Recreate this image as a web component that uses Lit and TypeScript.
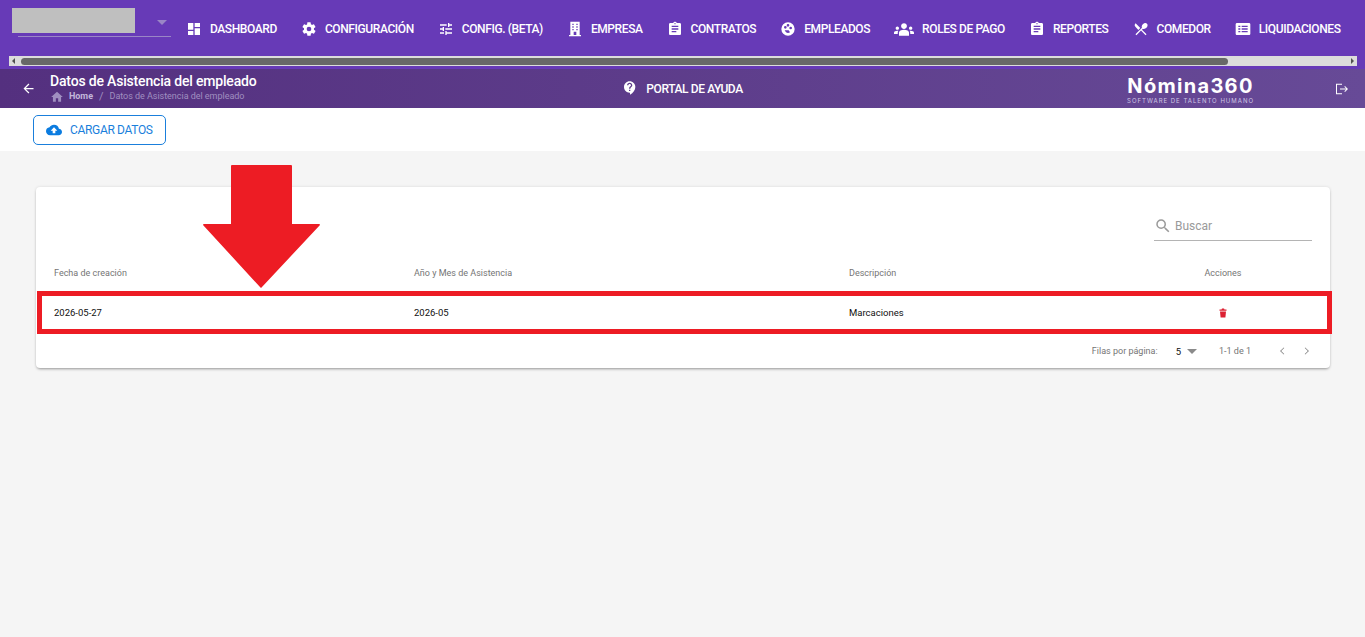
import { LitElement, html, css, svg } from 'lit';
import { customElement } from 'lit/decorators.js';

const icons: Record<string, ReturnType<typeof svg>> = {
  dashboard: svg`<path d="M3 13h8V3H3v10zm0 8h8v-6H3v6zm10 0h8V11h-8v10zm0-18v6h8V3h-8z"/>`,
  gear: svg`<path d="M19.4 13c.04-.33.06-.66.06-1s-.02-.67-.06-1l2.1-1.65c.2-.15.25-.42.12-.64l-2-3.46c-.12-.22-.39-.3-.61-.22l-2.49 1c-.52-.4-1.08-.73-1.69-.98l-.38-2.65A.49.49 0 0 0 14 2h-4c-.25 0-.46.18-.49.42l-.38 2.65c-.61.25-1.17.59-1.69.98l-2.49-1c-.23-.09-.49 0-.61.22l-2 3.46c-.13.22-.07.49.12.64L4.57 11c-.04.33-.07.67-.07 1s.03.67.07 1l-2.11 1.65c-.19.15-.25.42-.12.64l2 3.46c.12.22.39.3.61.22l2.49-1c.52.4 1.08.73 1.69.98l.38 2.65c.03.24.24.42.49.42h4c.25 0 .46-.18.49-.42l.38-2.65c.61-.25 1.17-.59 1.69-.98l2.49 1c.23.09.49 0 .61-.22l2-3.46c.12-.22.07-.49-.12-.64L19.4 13zM12 15.5a3.5 3.5 0 1 1 0-7 3.5 3.5 0 0 1 0 7z"/>`,
  tune: svg`<path d="M3 17v2h6v-2H3zM3 5v2h10V5H3zm10 16v-2h8v-2h-8v-2h-2v6h2zM7 9v2H3v2h4v2h2V9H7zm14 4v-2H11v2h10zm-6-4h2V7h4V5h-4V3h-2v6z"/>`,
  building: svg`<path fill-rule="evenodd" d="M3 23v-2h2V1h14v20h2v2H3zM8 4v2h2V4H8zm0 4v2h2V8H8zm0 4v2h2v-2H8zm6-8v2h2V4h-2zm0 4v2h2V8h-2zm0 4v2h2v-2h-2zm-4 4v5h4v-5h-4z"/>`,
  clipboard: svg`<path d="M19 3h-4.18C14.4 1.84 13.3 1 12 1s-2.4.84-2.82 2H5c-1.1 0-2 .9-2 2v14c0 1.1.9 2 2 2h14c1.1 0 2-.9 2-2V5c0-1.1-.9-2-2-2zm-7 0c.55 0 1 .45 1 1s-.45 1-1 1-1-.45-1-1 .45-1 1-1zm2 14H7v-2h7v2zm3-4H7v-2h10v2zm0-4H7V7h10v2z"/>`,
  face: svg`<path fill-rule="evenodd" d="M12 2a10 10 0 1 0 0 20 10 10 0 0 0 0-20zM8 7.5a2 2 0 1 1 0 4 2 2 0 0 1 0-4zm8 1a2 2 0 1 1 0 4 2 2 0 0 1 0-4zm-4-4a2 2 0 1 1 0 4 2 2 0 0 1 0-4zm-5 9.5c1 2.5 3 4 5 4 1 0 2-.3 3-1l-2-3h-6z"/>`,
  people: svg`<path d="M12 12.75c1.63 0 3.07.39 4.24.9 1.08.48 1.76 1.56 1.76 2.73V20H6v-3.61c0-1.18.68-2.26 1.76-2.73 1.17-.52 2.61-.91 4.24-.91zM4 13c1.1 0 2-.9 2-2s-.9-2-2-2-2 .9-2 2 .9 2 2 2zm1.13 1.1c-.37-.06-.74-.1-1.13-.1-.99 0-1.93.21-2.78.58A2 2 0 0 0 0 16.43V18h4.5v-1.61c0-.83.23-1.61.63-2.29zM20 13c1.1 0 2-.9 2-2s-.9-2-2-2-2 .9-2 2 .9 2 2 2zm4 3.43c0-.81-.48-1.53-1.22-1.85A6.95 6.95 0 0 0 20 14c-.39 0-.76.04-1.13.1.4.68.63 1.46.63 2.29V18H24v-1.57zM12 5c1.93 0 3.5 1.57 3.5 3.5S13.93 12 12 12s-3.5-1.57-3.5-3.5S10.07 5 12 5z"/>`,
  cutlery: svg`<path d="M8.1 13.34l2.83-2.83L3.91 3.5a4 4 0 0 0 0 5.66l4.19 4.18zm6.78-1.81c1.53.71 3.68.21 5.27-1.38 1.91-1.91 2.28-4.65.81-6.12-1.46-1.46-4.2-1.1-6.12.81-1.59 1.59-2.09 3.74-1.38 5.27L3.7 19.87l1.41 1.41L12 14.41l6.88 6.88 1.41-1.41L13.41 13l1.47-1.47z"/>`,
  list: svg`<path fill-rule="evenodd" d="M21 3H3c-1.1 0-2 .9-2 2v14c0 1.1.9 2 2 2h18c1.1 0 2-.9 2-2V5c0-1.1-.9-2-2-2zM5 7h3v2H5V7zm0 4h3v2H5v-2zm0 4h3v2H5v-2zm5-8h9v2h-9V7zm0 4h9v2h-9v-2zm0 4h9v2h-9v-2z"/>`,
  back: svg`<path d="M20 11H7.83l5.59-5.59L12 4l-8 8 8 8 1.41-1.41L7.83 13H20v-2z"/>`,
  home: svg`<path d="M10 20v-6h4v6h5v-8h3L12 3 2 12h3v8z"/>`,
  help: svg`<path d="M11.5 2C6.81 2 3 5.81 3 10.5S6.81 19 11.5 19h.5v3c4.86-2.34 8-7 8-11.5C20 5.81 16.19 2 11.5 2zm1 14.5h-2v-2h2v2zm0-3.5h-2c0-3.25 3-3 3-5 0-1.1-.9-2-2-2s-2 .9-2 2h-2c0-2.21 1.79-4 4-4s4 1.79 4 4c0 2.5-3 2.75-3 5z"/>`,
  logout: svg`<path d="M3 4h9v1.5H4.5v13H12V20H3zM16.5 7.5l-1 1 2.7 2.7H9v1.6h9.2l-2.7 2.7 1 1 4.5-4.5z"/>`,
  upload: svg`<path d="M19.35 10.04A7.49 7.49 0 0 0 12 4C9.11 4 6.6 5.64 5.35 8.04A5.994 5.994 0 0 0 0 14c0 3.31 2.69 6 6 6h13c2.76 0 5-2.24 5-5 0-2.64-2.05-4.78-4.65-4.96zM14 13v4h-4v-4H7l5-5 5 5h-3z"/>`,
  search: svg`<path d="M15.5 14h-.79l-.28-.27A6.47 6.47 0 0 0 16 9.5 6.5 6.5 0 1 0 9.5 16c1.61 0 3.09-.59 4.23-1.57l.27.28v.79l5 4.99L20.49 19l-4.99-5zm-6 0C7.01 14 5 11.99 5 9.5S7.01 5 9.5 5 14 7.01 14 9.5 11.99 14 9.5 14z"/>`,
  trash: svg`<path d="M5 5h4l1-2h4l1 2h4v2.4H5zM6 9h12l-1.2 12H7.2z"/>`,
  left: svg`<path d="M15.41 7.41L14.6 6.6 9 12l5.6 5.4.81-.81L10.83 12z"/>`,
  right: svg`<path d="M9.4 6.6l-.81.81L13.17 12l-4.58 4.59.81.81L15 12z"/>`,
};

const icon = (name: string, size: number) => html`<svg
  class="icon"
  width=${size}
  height=${size}
  viewBox="0 0 24 24"
  fill="currentColor"
>${icons[name]}</svg>`;

const menu = [
  { icon: 'dashboard', label: 'DASHBOARD', size: 16 },
  { icon: 'gear', label: 'CONFIGURACIÓN', size: 16 },
  { icon: 'tune', label: 'CONFIG. (BETA)', size: 16 },
  { icon: 'building', label: 'EMPRESA', size: 16 },
  { icon: 'clipboard', label: 'CONTRATOS', size: 16 },
  { icon: 'face', label: 'EMPLEADOS', size: 16 },
  { icon: 'people', label: 'ROLES DE PAGO', size: 20 },
  { icon: 'clipboard', label: 'REPORTES', size: 16 },
  { icon: 'cutlery', label: 'COMEDOR', size: 16 },
  { icon: 'list', label: 'LIQUIDACIONES', size: 16 },
];

@customElement('app-root')
export class AppRoot extends LitElement {
  static styles = css`
    :host {
      display: block;
      position: relative;
      height: 637px;
      overflow: hidden;
      background: #f5f5f5;
      font-family: Roboto, 'Liberation Sans', sans-serif;
      color: #000;
    }

    .icon {
      display: block;
      flex: none;
    }

    .topbar {
      height: 69px;
      box-sizing: border-box;
      background: #673ab7;
      padding-top: 8px;
    }

    .menu-row {
      display: flex;
      height: 48px;
      padding-left: 18px;
    }

    .company {
      position: relative;
      width: 153px;
      height: 29px;
      flex: none;
      box-sizing: border-box;
      border-bottom: 1px solid #9a86c6;
    }

    .company .mask {
      position: absolute;
      left: -6px;
      top: 0;
      width: 123px;
      height: 25px;
      background: #bfbfbf;
    }

    .company .caret {
      position: absolute;
      right: 4px;
      top: 12px;
      width: 0;
      height: 0;
      border: 5px solid transparent;
      border-top-color: #9a86c6;
    }

    nav {
      display: flex;
      margin-left: 15px;
      gap: 24px;
    }

    .item {
      display: flex;
      align-items: center;
      gap: 8px;
      height: 42px;
      color: #fff;
      font-size: 12px;
      font-weight: 500;
      letter-spacing: -0.4px;
      white-space: nowrap;
    }

    .scroll {
      display: flex;
      align-items: center;
      margin: 0 8px 0 9px;
      height: 10px;
      background: #dcdcdc;
      padding: 0 3px;
      box-sizing: border-box;
    }

    .scroll .thumb {
      height: 7px;
      flex: none;
      width: 1207px;
      margin: 0 auto 0 6px;
      border-radius: 4px;
      background: #686868;
    }

    .scroll .arrow {
      flex: none;
      width: 0;
      height: 0;
      border: 3px solid transparent;
    }

    .scroll .arrow.l {
      border-right-color: #505050;
      margin-left: -3px;
    }

    .scroll .arrow.r {
      border-left-color: #505050;
      margin-right: -3px;
    }

    .heading {
      height: 39px;
      display: grid;
      grid-template-columns: 1fr auto 1fr;
      align-items: center;
      background: linear-gradient(90deg, #54307f 0%, #674a97 100%);
      color: #fff;
    }

    .heading-left {
      display: flex;
      align-items: center;
      padding-left: 21px;
      gap: 14px;
    }

    .title {
      font-size: 14px;
      font-weight: 500;
      line-height: 16px;
      letter-spacing: -0.18px;
      margin-top: -1px;
    }

    .crumbs {
      display: flex;
      align-items: center;
      font-size: 9px;
      line-height: 13px;
      letter-spacing: -0.03px;
      color: #a08fc0;
      margin-top: 1px;
    }

    .crumbs .home {
      color: #c2b6da;
      font-weight: 700;
      margin-left: 5px;
    }

    .crumbs .sep {
      margin: 0 6px;
      font-size: 11px;
    }

    .help {
      display: flex;
      align-items: center;
      gap: 8px;
      font-size: 12px;
      font-weight: 500;
      letter-spacing: -0.4px;
      margin-top: 1px;
    }

    .help .icon {
      margin-top: -2px;
    }

    .heading-right {
      display: flex;
      align-items: center;
      justify-content: flex-end;
      padding-right: 15px;
    }

    .logo {
      display: flex;
      flex-direction: column;
      align-items: center;
      margin-right: 80px;
    }

    .logo b {
      font-family: Inter, sans-serif;
      font-size: 20px;
      font-weight: 700;
      line-height: 22px;
      letter-spacing: 1.3px;
      margin-top: 1px;
    }

    .logo span {
      font-family: Inter, sans-serif;
      font-size: 6px;
      line-height: 7px;
      letter-spacing: 1px;
      color: #cfc6e4;
      white-space: nowrap;
    }

    .toolbar {
      height: 43px;
      background: #fff;
      padding: 7px 0 0 33px;
      box-sizing: border-box;
    }

    .load {
      display: flex;
      align-items: center;
      gap: 8px;
      width: 133px;
      height: 30px;
      box-sizing: border-box;
      border: 1px solid #1a7fdc;
      border-radius: 5px;
      background: #fff;
      padding: 0 0 0 12px;
      font: 400 12px Roboto, sans-serif;
      letter-spacing: -0.33px;
      color: #1a7fdc;
    }

    .load .icon {
      color: #0b7ce0;
    }

    .content {
      padding: 36px 35px 0 36px;
    }

    .card {
      background: #fff;
      border-radius: 4px;
      box-shadow: 0 2px 3px -1px rgba(0, 0, 0, 0.35), 0 0 3px rgba(0, 0, 0, 0.12);
    }

    .search-row {
      display: flex;
      justify-content: flex-end;
      padding: 26px 18px 0 0;
    }

    .search {
      display: flex;
      align-items: center;
      gap: 3px;
      width: 158px;
      height: 28px;
      box-sizing: border-box;
      border-bottom: 1px solid #b4b4b4;
      color: #9a9a9a;
      font-size: 12px;
      padding-bottom: 2px;
    }

    .cols {
      display: grid;
      grid-template-columns: 360px 435px 1fr 125px;
      padding-left: 18px;
      align-items: center;
    }

    .head {
      height: 51px;
      font-size: 9px;
      color: #757575;
      padding-top: 13px;
      box-sizing: border-box;
    }

    .row {
      height: 42px;
      box-sizing: border-box;
      padding-bottom: 1px;
      font-size: 9.5px;
      color: #111;
    }

    .actions {
      display: flex;
      justify-content: center;
      text-align: center;
      padding-right: 89px;
    }

    .trash {
      color: #dc2133;
    }

    .footer {
      display: flex;
      align-items: center;
      justify-content: flex-end;
      height: 34px;
      padding-right: 15px;
      font-size: 9px;
      color: #757575;
    }

    .rows-label {
      margin-right: 18px;
    }

    .rows-value {
      color: #111;
      font-size: 9.5px;
      margin-right: 6px;
    }

    .rows-caret {
      width: 0;
      height: 0;
      border: 5px solid transparent;
      border-top-color: #8a8a8a;
      margin: 5px 22px 0 0;
    }

    .range {
      margin-right: 23px;
    }

    .pager {
      display: flex;
      gap: 9px;
      color: #888;
    }

    .highlight {
      position: absolute;
      left: 37px;
      top: 291px;
      width: 1295px;
      height: 43px;
      box-sizing: border-box;
      border: 5px solid #ed1c24;
      pointer-events: none;
    }

    .arrow-mark {
      position: absolute;
      left: 203px;
      top: 165px;
      pointer-events: none;
    }
  `;

  render() {
    return html`
      <header class="topbar">
        <div class="menu-row">
          <div class="company">
            <div class="mask"></div>
            <div class="caret"></div>
          </div>
          <nav>
            ${menu.map(
              (m) => html`<div class="item">${icon(m.icon, m.size)}<span>${m.label}</span></div>`
            )}
          </nav>
        </div>
        <div class="scroll">
          <div class="arrow l"></div>
          <div class="thumb"></div>
          <div class="arrow r"></div>
        </div>
      </header>
      <section class="heading">
        <div class="heading-left">
          ${icon('back', 15)}
          <div>
            <div class="title">Datos de Asistencia del empleado</div>
            <div class="crumbs">
              ${icon('home', 14)}
              <span class="home">Home</span>
              <span class="sep">/</span>
              <span>Datos de Asistencia del empleado</span>
            </div>
          </div>
        </div>
        <div class="help">${icon('help', 16)}<span>PORTAL DE AYUDA</span></div>
        <div class="heading-right">
          <div class="logo">
            <b>Nómina360</b>
            <span>SOFTWARE DE TALENTO HUMANO</span>
          </div>
          ${icon('logout', 16)}
        </div>
      </section>
      <div class="toolbar">
        <button class="load">${icon('upload', 16)}<span>CARGAR DATOS</span></button>
      </div>
      <main class="content">
        <div class="card">
          <div class="search-row">
            <div class="search">${icon('search', 18)}<span>Buscar</span></div>
          </div>
          <div class="cols head">
            <div>Fecha de creación</div>
            <div>Año y Mes de Asistencia</div>
            <div>Descripción</div>
            <div class="actions">Acciones</div>
          </div>
          <div class="cols row">
            <div>2026-05-27</div>
            <div>2026-05</div>
            <div>Marcaciones</div>
            <div class="actions trash">${icon('trash', 12)}</div>
          </div>
          <div class="footer">
            <span class="rows-label">Filas por página:</span>
            <span class="rows-value">5</span>
            <span class="rows-caret"></span>
            <span class="range">1-1 de 1</span>
            <div class="pager">${icon('left', 16)}${icon('right', 16)}</div>
          </div>
        </div>
      </main>
      <div class="highlight"></div>
      <svg class="arrow-mark" width="117" height="124" viewBox="0 0 117 124" fill="#ed1c24">
        <path d="M28 1q0-1 1-1h59q1 0 1 1v58h27q1 0 1 1L59 122 58 123 57 122 0 60q0-1 1-1h27z" />
      </svg>
    `;
  }
}

declare global {
  interface HTMLElementTagNameMap {
    'app-root': AppRoot;
  }
}
